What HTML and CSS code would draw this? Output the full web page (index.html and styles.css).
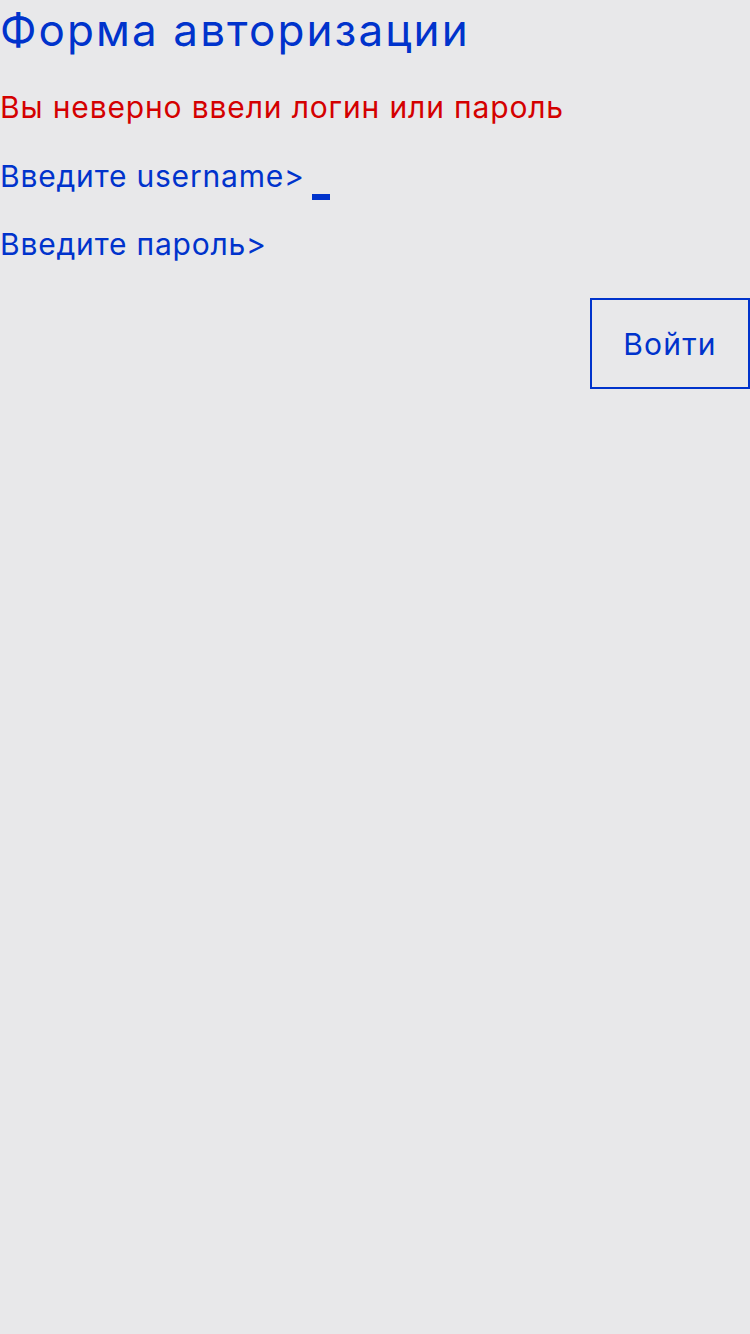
FILE: index.html
```html
<!DOCTYPE html>
<html lang="ru">
<head>
<meta charset="utf-8">
<link rel="stylesheet" href="styles.css">
</head>
<body>
<div class="page">
  <h1 class="title">Форма авторизации</h1>
  <p class="error">Вы неверно ввели логин или пароль</p>
  <div class="field"><span class="label">Введите username&gt;</span><span class="cursor"></span></div>
  <div class="field"><span class="label">Введите пароль&gt;</span></div>
  <div class="actions"><button class="btn">Войти</button></div>
</div>
</body>
</html>
```
FILE: styles.css
```css
html, body {
  margin: 0;
  padding: 0;
  background: #e8e8ea;
}
body {
  font-family: Inter, "Noto Sans", sans-serif;
  color: #0033cc;
}
.page {
  width: 750px;
  min-height: 1334px;
  display: flex;
  flex-direction: column;
}
.title {
  margin: 0;
  font-size: 44px;
  font-weight: 400;
  line-height: 61px;
  letter-spacing: 2.1px;
}
.error {
  margin: 24px 0 0;
  color: #d40000;
  font-size: 30px;
  line-height: 44px;
  letter-spacing: 0.85px;
}
.field {
  margin-top: 25px;
  font-size: 30px;
  line-height: 44px;
  letter-spacing: 0.8px;
  display: flex;
  align-items: flex-end;
}
.field + .field {
  margin-top: 24px;
}
.cursor {
  display: block;
  width: 18px;
  height: 6px;
  background: #0033cc;
  margin-left: 7px;
  margin-bottom: -2px;
}
.actions {
  display: flex;
  justify-content: flex-end;
  margin-top: 32px;
}
.btn {
  width: 160px;
  height: 91px;
  border: 2px solid #0033cc;
  background: transparent;
  color: #0033cc;
  font-family: inherit;
  font-size: 30px;
  letter-spacing: 1.2px;
  padding: 0;
}
```
